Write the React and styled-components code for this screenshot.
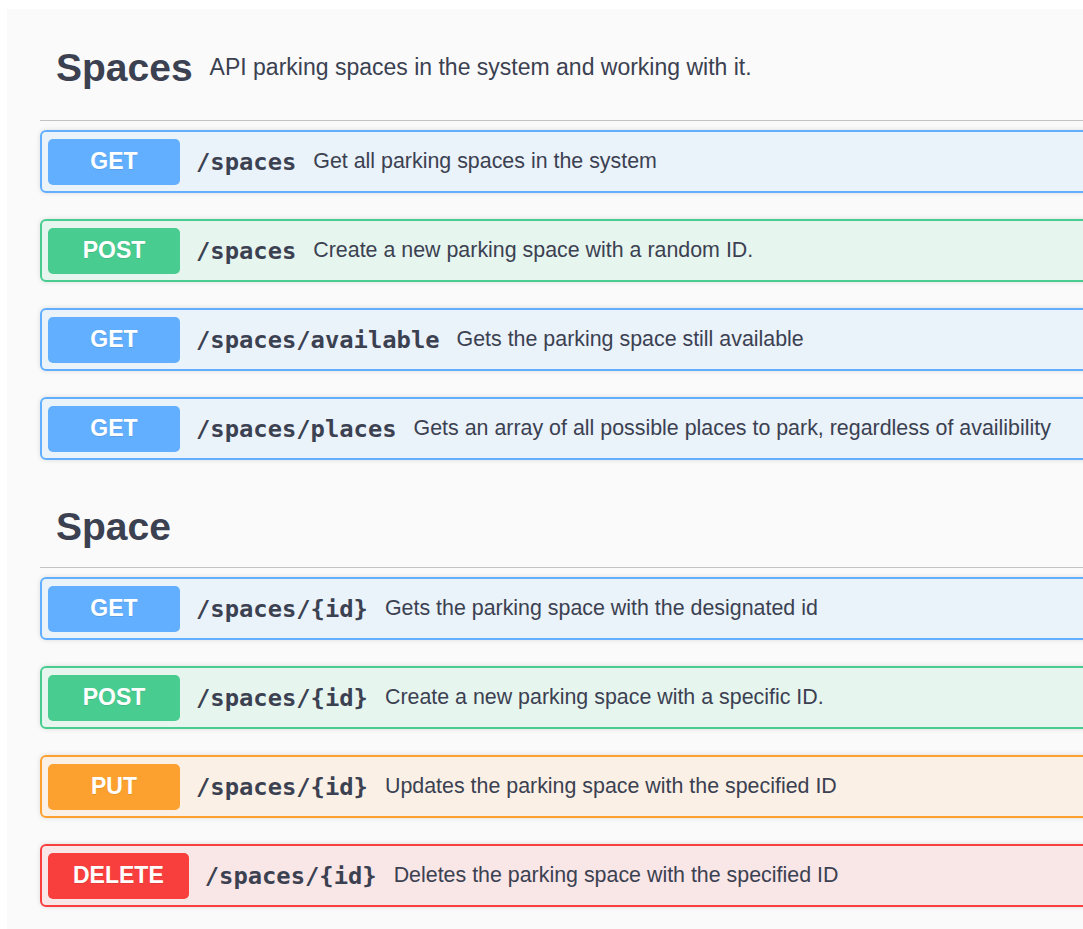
import React from "react";
import styled, { createGlobalStyle } from "styled-components";

const GlobalStyle = createGlobalStyle`
  html, body {
    margin: 0;
    padding: 0;
    background: #ffffff;
    overflow: hidden;
  }
  body {
    font-family: "Liberation Sans", Arial, sans-serif;
    color: #3b4151;
  }
`;

// method colours, same palette swagger uses
const methods = {
  get: { color: "#61affe", bg: "rgba(97, 175, 254, 0.1)" },
  post: { color: "#49cc90", bg: "rgba(73, 204, 144, 0.1)" },
  put: { color: "#fca130", bg: "rgba(252, 161, 48, 0.1)" },
  delete: { color: "#f93e3e", bg: "rgba(249, 62, 62, 0.1)" },
};

const sections = [
  {
    name: "Spaces",
    info: "API parking spaces in the system and working with it.",
    ops: [
      { method: "get", path: "/spaces", summary: "Get all parking spaces in the system" },
      { method: "post", path: "/spaces", summary: "Create a new parking space with a random ID." },
      { method: "get", path: "/spaces/available", summary: "Gets the parking space still available" },
      {
        method: "get",
        path: "/spaces/places",
        summary: "Gets an array of all possible places to park, regardless of availibility",
      },
    ],
  },
  {
    name: "Space",
    ops: [
      { method: "get", path: "/spaces/{id}", summary: "Gets the parking space with the designated id" },
      { method: "post", path: "/spaces/{id}", summary: "Create a new parking space with a specific ID." },
      { method: "put", path: "/spaces/{id}", summary: "Updates the parking space with the specified ID" },
      { method: "delete", path: "/spaces/{id}", summary: "Deletes the parking space with the specified ID" },
    ],
  },
];

const Page = styled.div`
  margin: 9px 0 0 7px;
  width: 1300px;
  min-height: 100vh;
  background: #fafafa;
  padding: 6px 0 40px 33px;
  box-sizing: border-box;
`;

const Section = styled.section`
  display: flex;
  flex-direction: column;
  margin-bottom: 27px;
`;

const TagHeader = styled.div`
  display: flex;
  align-items: center;
  box-sizing: border-box;
  height: ${(p) => (p.$tall ? "106px" : "81px")};
  padding: 0 16px;
  border-bottom: 1px solid rgba(59, 65, 81, 0.3);
`;

const TagName = styled.h4`
  margin: 0;
  font-size: 39px;
  font-weight: 700;
  color: #3b4151;
`;

const TagInfo = styled.small`
  padding-left: 17px;
  font-size: 23px;
  color: #3b4151;
`;

const OpList = styled.div`
  display: flex;
  flex-direction: column;
  gap: 26px;
  margin-top: 9px;
`;

const OpRow = styled.div`
  display: flex;
  align-items: center;
  height: 63px;
  box-sizing: border-box;
  padding: 0 6px;
  border: 2px solid ${(p) => p.$color};
  border-radius: 6px;
  background: ${(p) => p.$bg};
  box-shadow: 0 0 5px rgba(0, 0, 0, 0.12);
`;

const Badge = styled.span`
  display: flex;
  align-items: center;
  justify-content: center;
  min-width: 132px;
  height: 46px;
  padding: 0 25px;
  box-sizing: border-box;
  border-radius: 5px;
  background: ${(p) => p.$color};
  color: #ffffff;
  font-size: 23px;
  font-weight: 700;
  text-shadow: 0 1px 0 rgba(0, 0, 0, 0.1);
`;

const Path = styled.span`
  padding-left: 16px;
  font-family: "DejaVu Sans Mono", monospace;
  font-size: 23.8px;
  font-weight: 700;
  color: #3b4151;
`;

const Summary = styled.span`
  padding-left: 17px;
  font-size: 21.4px;
  color: #3b4151;
  white-space: nowrap;
`;

function Operation({ method, path, summary }) {
  const m = methods[method];
  return (
    <OpRow $color={m.color} $bg={m.bg}>
      <Badge $color={m.color}>{method.toUpperCase()}</Badge>
      <Path>{path}</Path>
      <Summary>{summary}</Summary>
    </OpRow>
  );
}

export default function App() {
  return (
    <>
      <GlobalStyle />
      <Page>
        {sections.map((s) => (
          <Section key={s.name}>
            <TagHeader $tall={!!s.info}>
              <TagName>{s.name}</TagName>
              {s.info && <TagInfo>{s.info}</TagInfo>}
            </TagHeader>
            <OpList>
              {s.ops.map((op, i) => (
                <Operation key={i} {...op} />
              ))}
            </OpList>
          </Section>
        ))}
      </Page>
    </>
  );
}
